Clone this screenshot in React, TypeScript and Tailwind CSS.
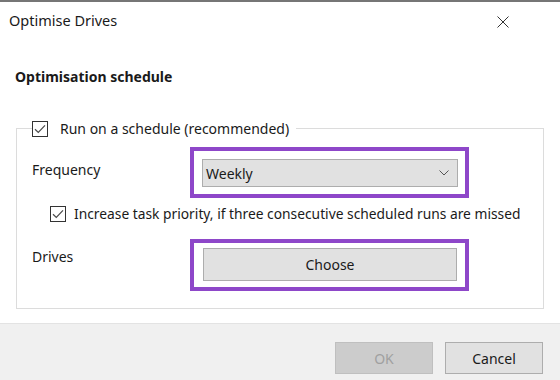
import React from "react";

function Check({ className = "" }: { className?: string }) {
  return (
    <span className={"flex h-[16px] w-[16px] items-center justify-center border border-[#333333] bg-white " + className}>
      <svg width="12" height="10" viewBox="0 0 12 10" fill="none">
        <path d="M1 5.2 L4.3 8.4 L11 1.4" stroke="#4a4a4a" strokeWidth="1.2" />
      </svg>
    </span>
  );
}

export default function App() {
  return (
    <div
      className="flex h-[380px] w-[560px] flex-col overflow-hidden border-t-2 border-[#767676] bg-white text-[#1a1a1a]"
      style={{ fontFamily: '"Noto Sans", "Open Sans", sans-serif' }}
    >
      <div className="flex h-[38px] items-center justify-between pl-[9px] pr-[51px]">
        <span className="text-[14.5px]">Optimise Drives</span>
        <svg width="12" height="12" viewBox="0 0 12 12" className="mt-[1px]">
          <path d="M0.5 0.5 L11.5 11.5 M11.5 0.5 L0.5 11.5" stroke="#333" strokeWidth="1" />
        </svg>
      </div>
      <div className="flex-1 px-[16px]">
        <div className="-ml-[1px] mt-[26px] text-[14px] font-bold">Optimisation schedule</div>
        <fieldset className="mt-[31px] w-[528px] border border-[#dcdcdc] pb-[17px] pl-[15px] pr-0">
          <legend className="flex items-center gap-[12px] pr-[7px] text-[14px]">
            <Check />
            <span>Run on a schedule (recommended)</span>
          </legend>
          <div className="mt-[8px] flex items-center">
            <span className="-mt-[6px] w-[158px] text-[14px]">Frequency</span>
            <div className="h-[51px] w-[279px] border-4 border-[#8e47c9] pl-[8px] pt-[8px]">
              <div className="flex h-[28px] w-[256px] items-center justify-between border border-[#adadad] bg-[#e1e1e1] pl-[3px] pr-[8px] text-[14px]">
                <span>Weekly</span>
                <svg width="10" height="6" viewBox="0 0 10 6" fill="none">
                  <path d="M0.5 0.5 L5 5 L9.5 0.5" stroke="#555" strokeWidth="1" />
                </svg>
              </div>
            </div>
          </div>
          <div className="ml-[18px] mt-[6px] flex items-center gap-[8px] text-[13.8px]">
            <Check />
            <span>Increase task priority, if three consecutive scheduled runs are missed</span>
          </div>
          <div className="mt-[14px] flex items-start">
            <span className="mt-[7px] w-[158px] text-[14px]">Drives</span>
            <div className="h-[52px] w-[279px] border-4 border-[#8e47c9] pl-[9px] pt-[5px]">
              <div className="flex h-[33px] w-[254px] items-center justify-center border border-[#adadad] bg-[#e1e1e1] text-[14px]">
                Choose
              </div>
            </div>
          </div>
        </fieldset>
      </div>
      <div className="flex h-[57px] items-start justify-end gap-[12px] border-t border-[#e3e3e3] bg-[#f0f0f0] pr-[17px] pt-[18px]">
        <div className="flex h-[32px] w-[98px] items-center justify-center border border-[#bfbfbf] bg-[#cccccc] text-[14px] text-[#a0a0a0]">
          OK
        </div>
        <div className="flex h-[32px] w-[98px] items-center justify-center border border-[#adadad] bg-[#e1e1e1] text-[14px]">
          Cancel
        </div>
      </div>
    </div>
  );
}
